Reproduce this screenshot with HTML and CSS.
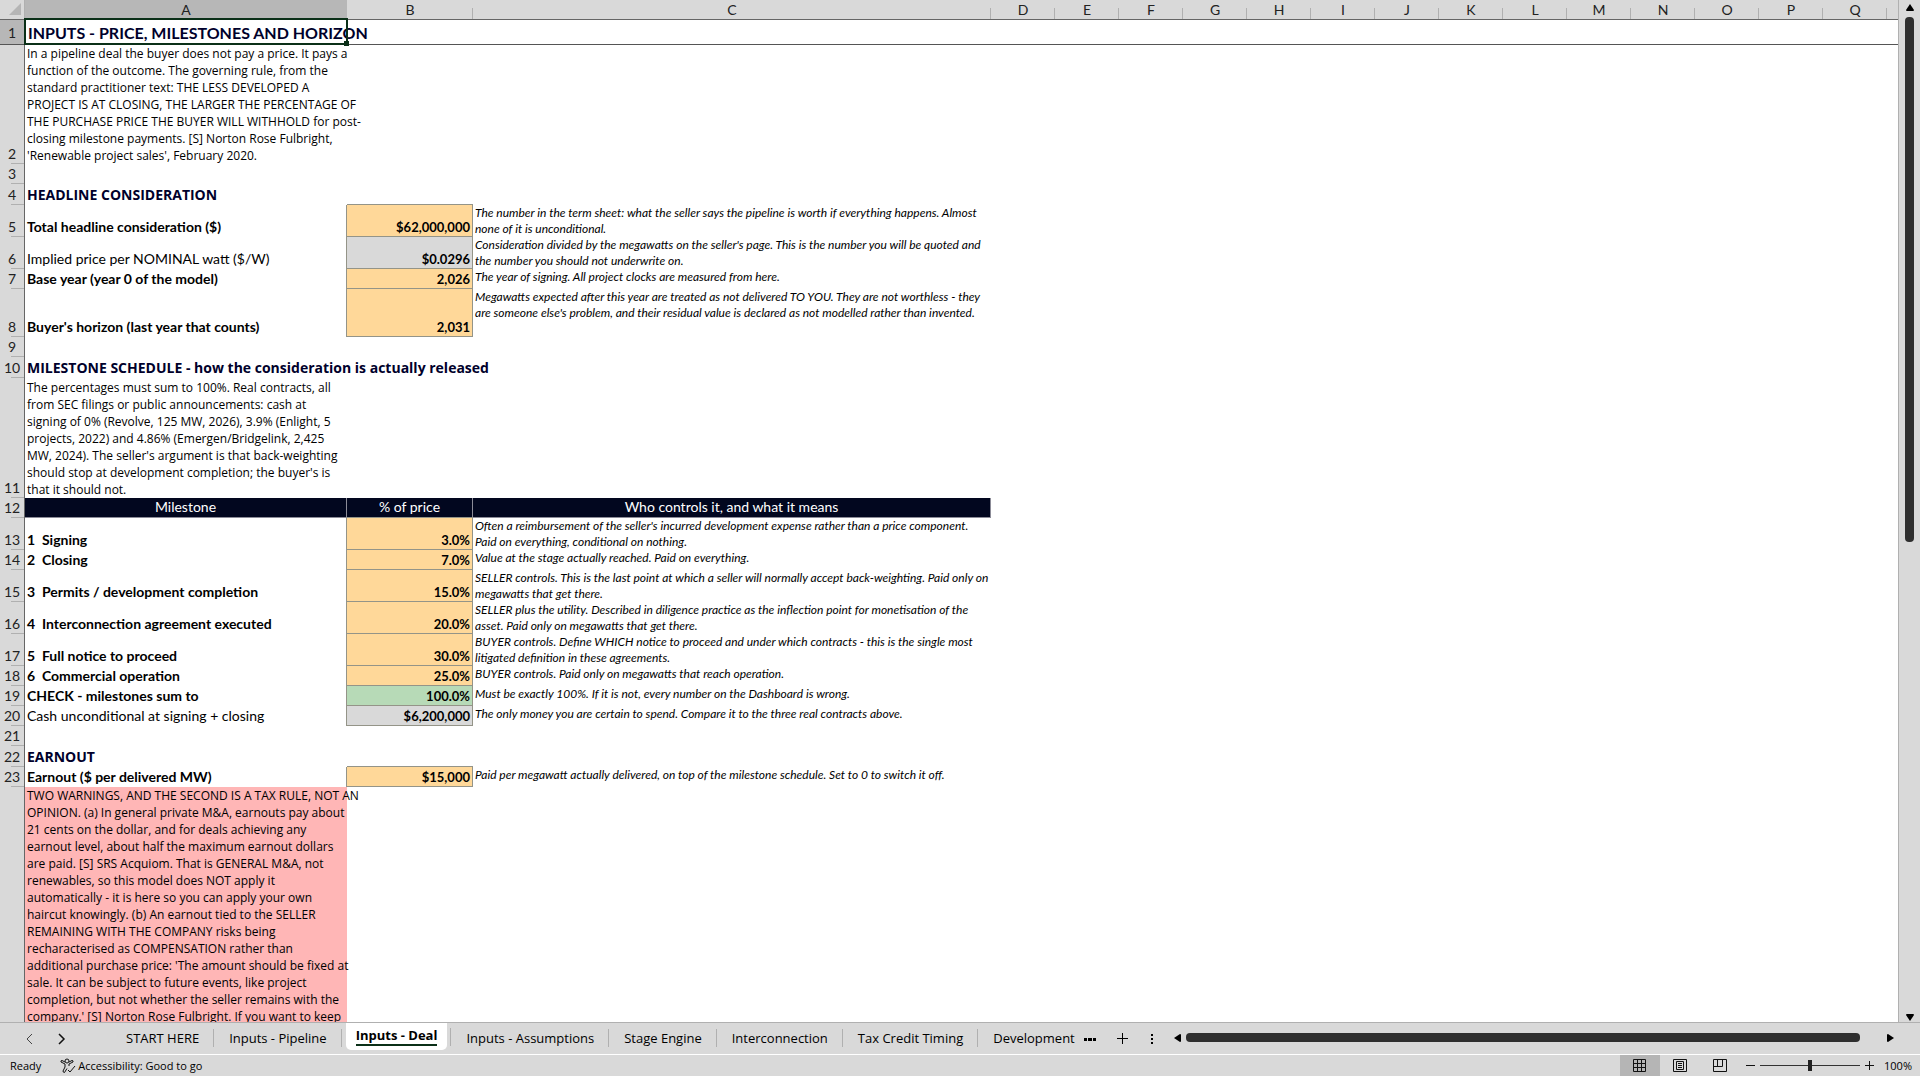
FILE: index.html
```
<!DOCTYPE html>
<html lang="en">
<head>
  <meta charset="UTF-8">
  <meta name="viewport" content="width=device-width, initial-scale=1.0">
  <title>Inputs - Deal</title>
  <link rel="stylesheet" href="styles.css">
</head>
<body>
  <!-- Grid and vertical scrollbar -->
  <main class="workspace">
    <div class="grid">
      <table class="sheet">
        <colgroup>
          <col class="col-num"><col class="col-a"><col class="col-b"><col class="col-c">
          <col class="col-std" span="14"><col>
        </colgroup>
        <thead>
          <tr>
            <th class="corner"><svg width="12" height="12" viewBox="0 0 12 12"><path d="M12 0v12H0z" fill="#b5b5b5"/></svg></th>
            <th class="active">A</th><th>B</th><th>C</th><th>D</th><th>E</th><th>F</th><th>G</th><th>H</th><th>I</th><th>J</th><th>K</th><th>L</th><th>M</th><th>N</th><th>O</th><th>P</th><th>Q</th><th class="last"></th>
          </tr>
        </thead>
        <tbody>
          <tr class="row-title"><th class="active">1</th><td class="title">INPUTS - PRICE, MILESTONES AND HORIZON<span class="selection"></span></td><td colspan="17"></td></tr>
          <tr class="row-note first"><th>2</th><td class="note">In a pipeline deal the buyer does not pay a price. It pays a<br>function of the outcome. The governing rule, from the<br>standard practitioner text: THE LESS DEVELOPED A<br>PROJECT IS AT CLOSING, THE LARGER THE PERCENTAGE OF<br>THE PURCHASE PRICE THE BUYER WILL WITHHOLD for post-<br>closing milestone payments. [S] Norton Rose Fulbright,<br>'Renewable project sales', February 2020.</td></tr>
          <tr><th>3</th></tr>
          <tr class="row-head"><th>4</th><td class="heading">HEADLINE CONSIDERATION</td></tr>
          <tr class="row-2"><th>5</th><td class="label">Total headline consideration ($)</td><td class="value">$62,000,000</td><td class="remark">The number in the term sheet: what the seller says the pipeline is worth if everything happens. Almost<br>none of it is unconditional.</td></tr>
          <tr class="row-2"><th>6</th><td>Implied price per NOMINAL watt ($/W)</td><td class="value calc">$0.0296</td><td class="remark">Consideration divided by the megawatts on the seller's page. This is the number you will be quoted and<br>the number you should not underwrite on.</td></tr>
          <tr><th>7</th><td class="label">Base year (year 0 of the model)</td><td class="value">2,026</td><td class="remark">The year of signing. All project clocks are measured from here.</td></tr>
          <tr class="row-3"><th>8</th><td class="label">Buyer's horizon (last year that counts)</td><td class="value">2,031</td><td class="remark">Megawatts expected after this year are treated as not delivered TO YOU. They are not worthless - they<br>are someone else's problem, and their residual value is declared as not modelled rather than invented.</td></tr>
          <tr><th>9</th></tr>
          <tr class="row-head"><th>10</th><td class="heading">MILESTONE SCHEDULE - how the consideration is actually released</td></tr>
          <tr class="row-note"><th>11</th><td class="note">The percentages must sum to 100%. Real contracts, all<br>from SEC filings or public announcements: cash at<br>signing of 0% (Revolve, 125 MW, 2026), 3.9% (Enlight, 5<br>projects, 2022) and 4.86% (Emergen/Bridgelink, 2,425<br>MW, 2024). The seller's argument is that back-weighting<br>should stop at development completion; the buyer's is<br>that it should not.</td></tr>
          <tr class="row-columns"><th>12</th><td>Milestone</td><td>% of price</td><td>Who controls it, and what it means</td></tr>
          <tr class="row-2"><th>13</th><td class="label">1&nbsp; Signing</td><td class="value">3.0%</td><td class="remark">Often a reimbursement of the seller's incurred development expense rather than a price component.<br>Paid on everything, conditional on nothing.</td></tr>
          <tr><th>14</th><td class="label">2&nbsp; Closing</td><td class="value">7.0%</td><td class="remark">Value at the stage actually reached. Paid on everything.</td></tr>
          <tr class="row-2"><th>15</th><td class="label">3&nbsp; Permits / development completion</td><td class="value">15.0%</td><td class="remark">SELLER controls. This is the last point at which a seller will normally accept back-weighting. Paid only on<br>megawatts that get there.</td></tr>
          <tr class="row-2"><th>16</th><td class="label">4&nbsp; Interconnection agreement executed</td><td class="value">20.0%</td><td class="remark">SELLER plus the utility. Described in diligence practice as the inflection point for monetisation of the<br>asset. Paid only on megawatts that get there.</td></tr>
          <tr class="row-2"><th>17</th><td class="label">5&nbsp; Full notice to proceed</td><td class="value">30.0%</td><td class="remark">BUYER controls. Define WHICH notice to proceed and under which contracts - this is the single most<br>litigated definition in these agreements.</td></tr>
          <tr><th>18</th><td class="label">6&nbsp; Commercial operation</td><td class="value">25.0%</td><td class="remark">BUYER controls. Paid only on megawatts that reach operation.</td></tr>
          <tr><th>19</th><td class="label">CHECK - milestones sum to</td><td class="value check">100.0%</td><td class="remark">Must be exactly 100%. If it is not, every number on the Dashboard is wrong.</td></tr>
          <tr><th>20</th><td>Cash unconditional at signing + closing</td><td class="value calc">$6,200,000</td><td class="remark">The only money you are certain to spend. Compare it to the three real contracts above.</td></tr>
          <tr><th>21</th></tr>
          <tr class="row-head"><th>22</th><td class="heading">EARNOUT</td></tr>
          <tr><th>23</th><td class="label">Earnout ($ per delivered MW)</td><td class="value">$15,000</td><td class="remark">Paid per megawatt actually delivered, on top of the milestone schedule. Set to 0 to switch it off.</td></tr>
          <tr class="row-warning"><th></th><td class="note warning">TWO WARNINGS, AND THE SECOND IS A TAX RULE, NOT AN<br>OPINION. (a) In general private M&amp;A, earnouts pay about<br>21 cents on the dollar, and for deals achieving any<br>earnout level, about half the maximum earnout dollars<br>are paid. [S] SRS Acquiom. That is GENERAL M&amp;A, not<br>renewables, so this model does NOT apply it<br>automatically - it is here so you can apply your own<br>haircut knowingly. (b) An earnout tied to the SELLER<br>REMAINING WITH THE COMPANY risks being<br>recharacterised as COMPENSATION rather than<br>additional purchase price: 'The amount should be fixed at<br>sale. It can be subject to future events, like project<br>completion, but not whether the seller remains with the<br>company.' [S] Norton Rose Fulbright. If you want to keep</td></tr>
        </tbody>
      </table>
    </div>
    <div class="vscroll">
      <button aria-label="Scroll up"><svg width="10" height="8" viewBox="0 0 10 8"><path d="M5 0l4 6q0 1-1 1H2Q1 7 1 6z"/></svg></button>
      <div class="vtrack"><div class="vthumb"></div></div>
      <button aria-label="Scroll down"><svg width="10" height="8" viewBox="0 0 10 8"><path d="M5 8L1 2q0-1 1-1h6q1 0 1 1z"/></svg></button>
    </div>
  </main>

  <!-- Sheet tabs -->
  <nav class="tabbar">
    <div class="tabs">
      <button class="step" aria-label="Previous sheet"><svg width="8" height="12" viewBox="0 0 8 12"><path d="M6 1L1 6l5 5" fill="none" stroke="#444"/></svg></button>
      <button class="step" aria-label="Next sheet"><svg width="8" height="12" viewBox="0 0 8 12"><path d="M1 1l5 5-5 5" fill="none" stroke="#111" stroke-width="1.500"/></svg></button>
      <div class="tab-list">
        <button class="tab">START HERE</button>
        <button class="tab">Inputs - Pipeline</button>
        <button class="tab current"><span>Inputs - Deal</span></button>
        <button class="tab">Inputs - Assumptions</button>
        <button class="tab">Stage Engine</button>
        <button class="tab">Interconnection</button>
        <button class="tab">Tax Credit Timing</button>
        <button class="tab">Development</button>
      </div>
    </div>
    <div class="tab-tools">
      <button aria-label="More sheets"><svg width="12" height="12" viewBox="0 0 12 12"><path d="M0 5h3v3H0zM4 5h4v3H4zM9 5h3v3H9z"/></svg></button>
      <button aria-label="New sheet"><svg width="12" height="12" viewBox="0 0 12 12"><path d="M5 0h1v11H5zM0 5h11v1H0z"/></svg></button>
      <button aria-label="Resize tabs"><svg width="4" height="12" viewBox="0 0 4 12"><path d="M1 1h2v2H1zM1 5h2v2H1zM1 9h2v2H1z"/></svg></button>
    </div>
    <div class="hscroll">
      <button aria-label="Scroll left"><svg width="8" height="10" viewBox="0 0 8 10"><path d="M0 5l6-4q1 0 1 1v6q0 1-1 1z"/></svg></button>
      <div class="htrack"><div class="hthumb"></div></div>
      <button aria-label="Scroll right"><svg width="8" height="10" viewBox="0 0 8 10"><path d="M8 5L2 1Q1 1 1 2v6q0 1 1 1z"/></svg></button>
    </div>
  </nav>

  <!-- Status bar -->
  <footer class="status">
    <span class="ready">Ready</span>
    <button class="access"><svg width="16" height="16" viewBox="0 0 16 16" fill="none" stroke="#111"><circle cx="7" cy="3" r="2"/><path d="M5 4L2 2.500Q.5 2.500 1 4l4 2v3l-2 4q0 1.500 1.500 1.500L7 10.500M9 4l3-1.500q1.500 0 1 1.500L9 6v2M8 12l2 2 5-6"/></svg>Accessibility: Good to go</button>
    <div class="views">
      <button class="on" aria-label="Normal"><svg width="14" height="14" viewBox="0 0 14 14"><path d="M.5.5h12v12H.5zM4.500.5v12M8.500.5v12M.5 4.500h12M.5 8.500h12"/></svg></button>
      <button aria-label="Page layout"><svg width="14" height="14" viewBox="0 0 14 14"><path d="M.5.5h13v12H.5zM3.500 2.500h7v8h-7zM5 4.500h4M5 6.500h4M5 8.500h4"/></svg></button>
      <button aria-label="Page break preview"><svg width="14" height="14" viewBox="0 0 14 14"><path d="M.5.5h13v12H.5zM4.500.5v7M9.500.5v7M.5 7.500h9"/></svg></button>
    </div>
    <div class="zoom">
      <button aria-label="Zoom out"><svg width="9" height="9" viewBox="0 0 9 9"><path d="M0 4.500h9"/></svg></button>
      <input type="range" min="0" max="200" value="100" aria-label="Zoom">
      <button aria-label="Zoom in"><svg width="9" height="9" viewBox="0 0 9 9"><path d="M0 4.500h9M4.500 0v9"/></svg></button>
      <span class="percent">100%</span>
    </div>
  </footer>
</body>
</html>
```
FILE: styles.css
```
* {
  box-sizing: border-box;
}
body {
  margin: 0;
  height: 100vh;
  display: flex;
  flex-direction: column;
  overflow: hidden;
  background: #d9d9d9;
  color: #000;
  font-family: Lato, Carlito, sans-serif;
  font-size: 14px;
}
button {
  display: flex;
  align-items: center;
  justify-content: center;
  padding: 0;
  border: 0;
  background: none;
  color: inherit;
  font: inherit;
}

/* Grid */
.workspace {
  flex: 1;
  min-height: 0;
  display: flex;
  border-bottom: 1px solid #b0b0b0;
}
.grid {
  flex: 1;
  min-width: 0;
  overflow: hidden;
  background: #fff;
  border-right: 1px solid #b0b0b0;
}
.sheet {
  width: 100%;
  table-layout: fixed;
  border-spacing: 0;
  line-height: 17px;
  white-space: nowrap;
}
.col-num { width: 25px; }
.col-a { width: 322px; }
.col-b { width: 126px; }
.col-c { width: 518px; }
.col-std { width: 64px; }
.sheet tr { height: 20px; }
.sheet .row-title { height: 25px; }
.sheet .row-head { height: 21px; }
.sheet .row-2 { height: 32px; }
.sheet .row-3 { height: 48px; }
.sheet .row-note { height: 120px; }
.sheet .first { height: 119px; }
.sheet th {
  padding: 0;
  font-weight: 400;
  color: #222;
}
.sheet td {
  padding: 0 2px 2px;
  vertical-align: bottom;
}

/* Column letters */
.sheet thead th {
  border-bottom: 1px solid #666;
  background: linear-gradient(#b0b0b0, #b0b0b0) right bottom / 1px 11px no-repeat #d9d9d9;
}
.sheet thead .corner {
  padding: 0 3px 1px 0;
  background: #d9d9d9;
  border-right: 1px solid #b0b0b0;
}
.corner svg {
  display: block;
  margin-left: auto;
}
.sheet thead .last {
  background: #d9d9d9;
}

/* Row numbers */
.sheet tbody th {
  padding-bottom: 2px;
  border-right: 1px solid #666;
  vertical-align: bottom;
  background: linear-gradient(#b0b0b0, #b0b0b0) right bottom / 13px 1px no-repeat #d9d9d9;
}
.sheet thead .active,
.sheet tbody .active {
  background: #b7b7b7;
}
.sheet .row-warning th {
  background: #d9d9d9;
}
.sheet .row-title th,
.sheet .row-title td {
  padding-bottom: 0;
  border-bottom: 1px solid #555;
  vertical-align: middle;
}

/* Cells */
.sheet .title {
  position: relative;
  padding-left: 3px;
  color: #00002b;
  font-size: 16px;
  font-weight: 700;
}
.selection {
  position: absolute;
  inset: -2px -1px -1px -1px;
  border: 2px solid #0b3018;
}
.selection::after {
  content: "";
  position: absolute;
  right: -3px;
  bottom: -3px;
  width: 5px;
  height: 5px;
  background: #0b3018;
}
.heading {
  color: #00002b;
  font-family: "Open Sans", "Noto Sans", sans-serif;
  font-weight: 700;
}
.label {
  font-weight: 700;
}
.sheet .note {
  padding-bottom: 0;
  font-family: "Open Sans", "Noto Sans", sans-serif;
  font-size: 12px;
}
.sheet .warning {
  background: #ffb6b6;
  vertical-align: top;
}
.sheet .value {
  padding-bottom: 0;
  border: solid #949488;
  border-width: 0 1px 1px 0;
  box-shadow: -1px 0 #949488, 0 -1px #949488;
  background: #ffd899;
  font-size: 13px;
  font-weight: 700;
  text-align: right;
}
.sheet .calc {
  background: #d9d9d9;
}
.sheet .check {
  background: #b7dab7;
}
.sheet .remark {
  padding-bottom: 0;
  font-size: 12px;
  line-height: 16px;
  font-style: italic;
  vertical-align: top;
}
.sheet .row-columns td {
  border: solid #8c8c98;
  border-width: 0 1px 1px 0;
  background: #02071f;
  color: #fff;
  text-align: center;
}

/* Vertical scrollbar */
.vscroll {
  width: 21px;
  display: flex;
  flex-direction: column;
  align-items: center;
  padding: 4px 0 1px;
}
.vtrack {
  flex: 1;
  padding: 5px 0;
}
.vthumb {
  width: 9px;
  height: 53%;
  border-radius: 4px;
  background: #2f2f2f;
}

/* Sheet tabs */
.tabbar,
.status {
  font-family: "Open Sans", "Noto Sans", sans-serif;
}
.tabbar {
  display: flex;
  height: 32px;
  border-bottom: 1px solid #fff;
}
.tabs {
  flex: 0 0 56%;
  display: flex;
  padding-left: 14px;
  overflow: hidden;
}
.step {
  flex: 0 0 32px;
}
.tab-list {
  display: flex;
  padding-left: 33px;
}
.tab {
  position: relative;
  flex: none;
  height: 31px;
  padding: 0 15px 2px;
  font-size: 13px;
}
.tab::after {
  content: "";
  position: absolute;
  right: 0;
  top: 6px;
  height: 18px;
  border-right: 1px solid #b0b0b0;
}
.tab.current {
  height: 28px;
  margin: -1px 4px 0;
  padding: 0 10px;
  border-radius: 0 0 5px 5px;
  background: #fff;
  font-weight: 700;
}
.tab.current::after {
  right: -4px;
}
.tab.current span {
  border-bottom: 2px solid #0b3018;
}
.tab-tools {
  display: flex;
  gap: 21px;
  padding: 0 20px 0 9px;
}
.hscroll {
  flex: 1;
  display: flex;
  align-items: center;
  padding: 0 26px 2px 0;
}
.htrack {
  flex: 1;
  padding: 0 26px 0 4px;
}
.hthumb {
  height: 9px;
  border-radius: 4px;
  background: #2f2f2f;
}

/* Status bar */
.status {
  display: flex;
  align-items: center;
  height: 21px;
  padding: 0 8px 0 10px;
  font-size: 11px;
}
.access {
  gap: 2px;
  margin-left: 19px;
}
.views {
  display: flex;
  margin-left: auto;
}
.views button {
  width: 40px;
  height: 21px;
}
.views .on {
  background: #b5b5b5;
}
.views svg,
.zoom svg {
  fill: none;
  stroke: #111;
}
.zoom {
  display: flex;
  align-items: center;
  gap: 5px;
  padding-left: 6px;
}
.zoom input {
  appearance: none;
  width: 100px;
  height: 12px;
  margin: 0;
  background: linear-gradient(#333, #333) center / 100% 1px no-repeat;
}
.zoom input::-webkit-slider-thumb {
  appearance: none;
  width: 4px;
  height: 11px;
  background: #222;
}
.percent {
  padding-left: 5px;
}
```
